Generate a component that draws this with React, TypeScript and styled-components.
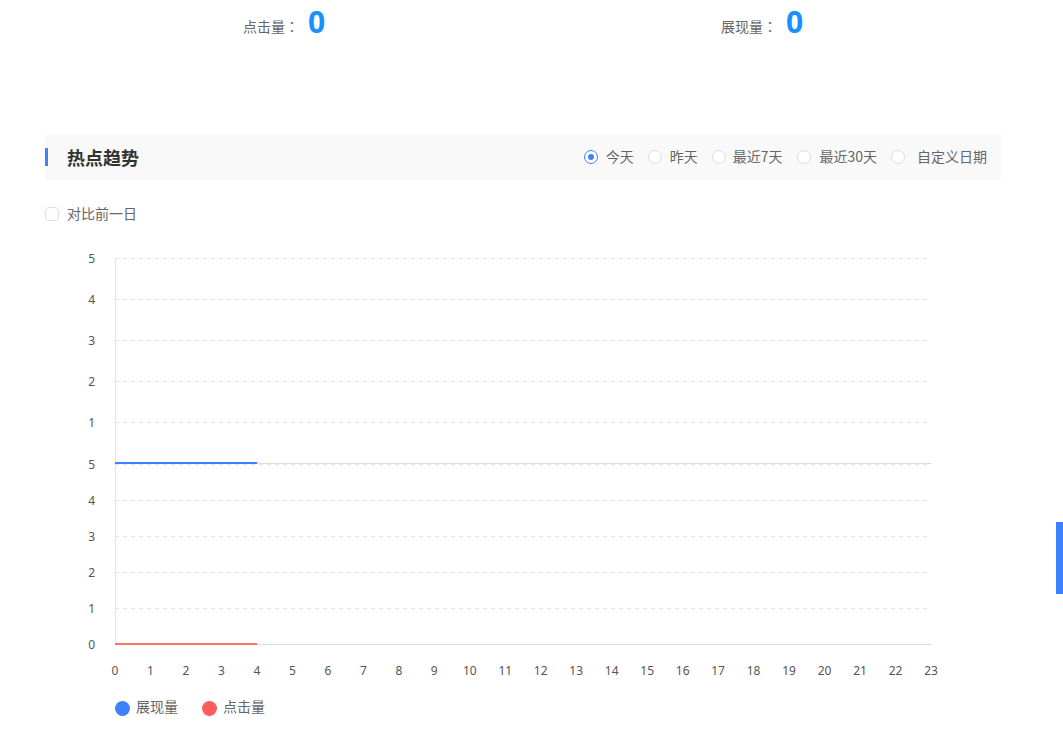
import React from 'react';
import styled, { createGlobalStyle } from 'styled-components';

const GlobalStyle = createGlobalStyle`
  html, body {
    margin: 0;
    padding: 0;
    background: #fff;
    overflow: hidden;
    font-family: "Noto Sans CJK SC", "Noto Sans", sans-serif;
  }
`;

const Page = styled.div`
  width: 956px;
  margin-left: 45px;
`;

const Stats = styled.div`
  display: grid;
  grid-template-columns: 1fr 1fr;
  height: 134px;
`;

const Stat = styled.div`
  display: flex;
  justify-content: center;
  align-items: baseline;
  gap: 9px;
  height: 42px;
`;

const StatLabel = styled.span`
  position: relative;
  top: -1px;
  font-family: "Noto Sans CJK TC", sans-serif;
  font-size: 14px;
  color: #666;
`;

const StatValue = styled.span`
  font-family: "Open Sans", sans-serif;
  font-size: 30px;
  line-height: 44px;
  font-weight: 700;
  color: #1890ff;
`;

const Header = styled.div`
  display: flex;
  align-items: center;
  justify-content: space-between;
  height: 46px;
  padding-right: 14px;
  background: #f9f9f9;
`;

const Title = styled.h2`
  margin: 0;
  padding-left: 19px;
  border-left: 3px solid #3f80ff;
  font-size: 18px;
  line-height: 18px;
  font-weight: 700;
  color: #333;
`;

const Radios = styled.div`
  display: flex;
  align-items: center;
`;

const RadioItem = styled.label<{ $gap: number }>`
  display: flex;
  align-items: center;
  margin-left: ${(p) => p.$gap}px;
  font-size: 14px;
  color: #666;
`;

const RadioMark = styled.span<{ $on?: boolean; $space: number }>`
  box-sizing: border-box;
  display: flex;
  align-items: center;
  justify-content: center;
  width: 14px;
  height: 14px;
  margin-right: ${(p) => p.$space}px;
  border: 1px solid ${(p) => (p.$on ? '#3f80ff' : '#ddd')};
  border-radius: 50%;
  background: #fff;
  &::after {
    content: '';
    display: ${(p) => (p.$on ? 'block' : 'none')};
    width: 6px;
    height: 6px;
    border-radius: 50%;
    background: #3f80ff;
  }
`;

const LabelText = styled.span`
  margin-top: -2px;
`;

const Compare = styled.label`
  display: flex;
  align-items: center;
  gap: 8px;
  height: 20px;
  margin-top: 24px;
  font-size: 14px;
  color: #666;
`;

const CheckBox = styled.span`
  box-sizing: border-box;
  width: 14px;
  height: 14px;
  border: 1px solid #ddd;
  border-radius: 4px;
  background: #fff;
`;

const ChartWrap = styled.div`
  height: 453px;
  margin: 21px 0 0 -45px;
`;

const Legend = styled.div`
  display: flex;
  align-items: center;
  gap: 24px;
  height: 20px;
  margin-left: 70px;
`;

const LegendItem = styled.div`
  display: flex;
  align-items: center;
  gap: 6px;
  font-size: 14px;
  color: #666;

  ${LabelText} {
    margin-top: -4px;
  }
`;

const Dot = styled.span<{ $color: string }>`
  width: 15px;
  height: 15px;
  border-radius: 50%;
  background: ${(p) => p.$color};
`;

const ScrollTab = styled.div`
  position: fixed;
  right: 0;
  top: 522px;
  width: 7px;
  height: 72px;
  background: #3f80ff;
`;

const radios = [
  { label: '今天', gap: 0, space: 8, on: true },
  { label: '昨天', gap: 14, space: 8 },
  { label: '最近7天', gap: 14, space: 7 },
  { label: '最近30天', gap: 15, space: 8 },
  { label: '自定义日期', gap: 14, space: 12 },
];

const AXIS = '#e6e6e6';
const GRID = '#e0e0e0';
const LEFT = 115;
const RIGHT = 931;
const OFFSET_Y = 245; // chart svg starts here on the page

const y = (pageY: number) => pageY - OFFSET_Y;
const topRows = [258, 299, 340, 381, 422];
const bottomRows = [464, 500, 536, 572, 608];
const hours = Array.from({ length: 24 }, (_, i) => i);
const hourX = (h: number) => LEFT + ((RIGHT - LEFT) * h) / 23;

const Chart: React.FC = () => (
  <svg width="1000" height="453" style={{ display: 'block' }} shapeRendering="crispEdges">
    <line x1={LEFT + 0.5} x2={LEFT + 0.5} y1={y(258)} y2={y(645)} stroke={AXIS} />
    {[...topRows, ...bottomRows].map((r) => (
      <line key={r} x1={LEFT} x2={RIGHT} y1={y(r) + 0.5} y2={y(r) + 0.5} stroke={GRID} strokeDasharray="4 4" />
    ))}
    <line x1={LEFT} x2={RIGHT} y1={y(463) + 0.5} y2={y(463) + 0.5} stroke="#dcdcdc" />
    <line x1={LEFT} x2={RIGHT} y1={y(644) + 0.5} y2={y(644) + 0.5} stroke="#dcdcdc" />
    <rect x={LEFT} y={y(462)} width={142} height={2} fill="#3f80ff" />
    <rect x={LEFT} y={y(643)} width={142} height={2} fill="#ff7261" />
    <g fontSize="12" fill="#555" textAnchor="end" fontFamily='"Noto Sans", sans-serif' shapeRendering="auto">
      {[...topRows, ...bottomRows].map((r, i) => (
        <text key={r} x={95} y={y(r) + 5}>{5 - (i % 5)}</text>
      ))}
      <text x={95} y={y(644) + 5}>0</text>
    </g>
    <g fontSize="12" fill="#555" textAnchor="middle" fontFamily='"Noto Sans", sans-serif' shapeRendering="auto">
      {hours.map((h) => (
        <text key={h} x={hourX(h)} y={y(675)}>{h}</text>
      ))}
    </g>
  </svg>
);

export default function App() {
  return (
    <>
      <GlobalStyle />
      <Page>
        <Stats>
          <Stat>
            <StatLabel>点击量：</StatLabel>
            <StatValue>0</StatValue>
          </Stat>
          <Stat>
            <StatLabel>展现量：</StatLabel>
            <StatValue>0</StatValue>
          </Stat>
        </Stats>
        <Header>
          <Title>热点趋势</Title>
          <Radios>
            {radios.map((r) => (
              <RadioItem key={r.label} $gap={r.gap}>
                <RadioMark $on={r.on} $space={r.space} />
                <LabelText>{r.label}</LabelText>
              </RadioItem>
            ))}
          </Radios>
        </Header>
        <Compare>
          <CheckBox />
          <LabelText>对比前一日</LabelText>
        </Compare>
        <ChartWrap>
          <Chart />
        </ChartWrap>
        <Legend>
          <LegendItem>
            <Dot $color="#3f80ff" />
            <LabelText>展现量</LabelText>
          </LegendItem>
          <LegendItem>
            <Dot $color="#ff5c5c" />
            <LabelText>点击量</LabelText>
          </LegendItem>
        </Legend>
      </Page>
      <ScrollTab />
    </>
  );
}
